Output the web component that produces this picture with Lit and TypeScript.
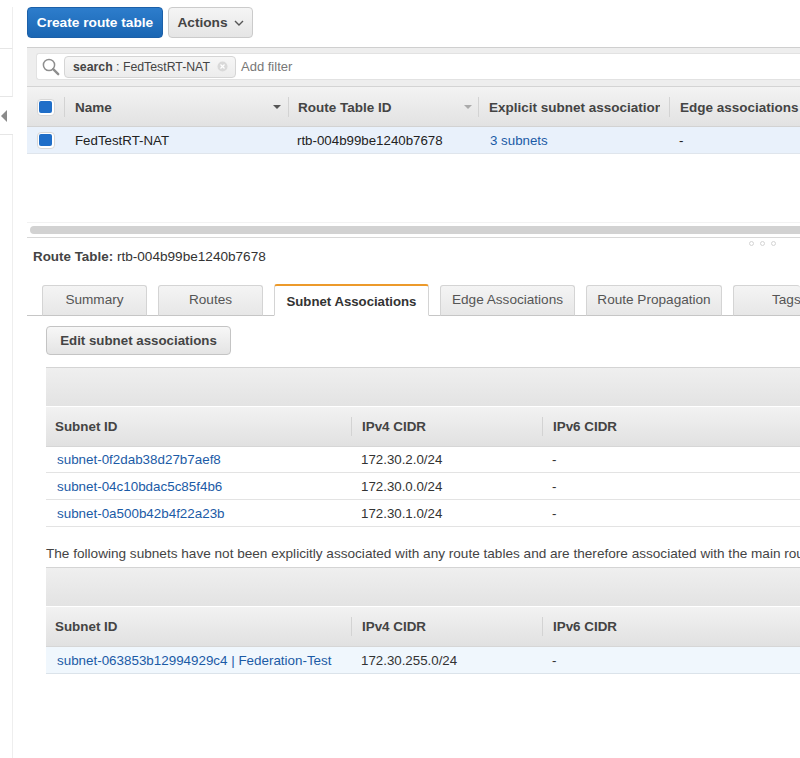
import { LitElement, html, css } from "lit";
import { customElement } from "lit/decorators.js";

const assoc = [
  ["subnet-0f2dab38d27b7aef8", "172.30.2.0/24"],
  ["subnet-04c10bdac5c85f4b6", "172.30.0.0/24"],
  ["subnet-0a500b42b4f22a23b", "172.30.1.0/24"],
];

@customElement("app-root")
export class AppRoot extends LitElement {
  static styles = css`
    :host {
      display: block;
      width: 800px;
      height: 758px;
      overflow: hidden;
      background: #fff;
      font-family: "Liberation Sans", Arial, sans-serif;
      font-size: 13.3px;
      color: #333;
    }
    * { box-sizing: border-box; }
    .page { display: flex; width: 800px; height: 758px; }
    .side {
      flex: 0 0 13px;
      height: 758px;
      padding-top: 7px;
      display: flex;
      flex-direction: column;
    }
    .side .s1 { height: 42px; border-bottom: 1px solid #e6e6e6; border-right: 1px solid #eeeeee; }
    .side .s2 { height: 48px; border-bottom: 1px solid #e6e6e6; border-right: 1px solid #eeeeee; }
    .side .handle { height: 38px; border-bottom: 1px solid #e6e6e6; display: flex; align-items: center; }
    .side .s3 { flex: 1; border-right: 1px solid #eeeeee; }
    .tri { width: 0; height: 0; border-top: 6px solid transparent; border-bottom: 6px solid transparent; border-right: 6px solid #8a8a8a; margin-left: 1px; }
    .main { flex: 0 0 787px; width: 787px; overflow: hidden; padding-left: 14px; }

    .actions { display: flex; gap: 5px; height: 47px; padding-top: 7px; }
    .btn {
      height: 31px; border-radius: 4px; font-weight: 700; font-size: 13.7px;
      display: flex; align-items: center; justify-content: center;
    }
    .primary {
      width: 136px; color: #fff; border: 1px solid #1c60a8;
      background: linear-gradient(#2d7dcc, #1a66b3);
    }
    .secondary {
      width: 85px; gap: 6px; color: #444; border: 1px solid #cbcbcb;
      background: linear-gradient(#f5f5f5, #e5e5e5);
    }
    .filter {
      width: 773px; height: 40px; background: #eeeeee;
      border-top: 1px solid #cfcfcf; border-bottom: 1px solid #d4d4d4;
      padding: 5px 0 6px 9px;
    }
    .search {
      height: 27px; background: #fff; border-radius: 3px 0 0 3px; border: 1px solid #e2e2e2; border-right: 0;
      display: flex; align-items: center; padding-left: 5px; gap: 3px;
    }
    .search svg.mag { flex: none; margin-right: 1px; }
    .chip {
      width: 172px; height: 22px; border: 1px solid #d5d5d5; border-radius: 4px;
      background: linear-gradient(#f6f6f6, #ececec); display: flex; align-items: center;
      padding-left: 8px; font-size: 12.3px; color: #444; gap: 7px; white-space: nowrap;
    }
    .chip b { font-weight: 700; }
    .add { color: #777; margin-left: 2px; font-size: 13px; }

    .thead {
      display: grid; height: 40px; width: 773px; align-items: center; padding-top: 1px;
      grid-template-columns: 37px 224px 190px 191px 131px;
      background: linear-gradient(#f3f3f3, #e2e2e2);
      border-bottom: 1px solid #d2d2d2;
      font-weight: 700; color: #444; font-size: 13.5px;
    }
    .th {
      height: 20px; display: flex; align-items: center; justify-content: space-between;
      border-left: 1px solid #d3d3d3; padding: 0 7px 0 10px; white-space: nowrap; overflow: hidden;
    }
    .th.id { padding: 0 6px 0 9px; }
    .th.first { border-left: 0; justify-content: center; padding: 0; }
    .clip { overflow: hidden; width: 171px; flex: none; }
    .caret { width: 0; height: 0; border-left: 4px solid transparent; border-right: 4px solid transparent; border-top: 4px solid #555; flex: none; }
    .caret.dim { border-top-color: #aaa; }
    .check {
      width: 18px; height: 17px; padding: 1.5px; border-radius: 4px; background: #fff; border: 1px solid #d7d7d7;
      display: block;
    }
    .check i { display: block; width: 100%; height: 100%; border-radius: 2px; background: #1f6ec8; }
    .trow {
      display: grid; height: 27px; width: 773px; align-items: center;
      grid-template-columns: 37px 224px 190px 191px 131px;
      background: #e9f1fb; border-bottom: 1px solid #dfe5ec; color: #222;
    }
    .trow .c { padding-left: 11px; white-space: nowrap; }
    .trow .c.id { padding-left: 9px; }
    .trow .c.link { padding-left: 12px; }
    .trow .c.dash { padding-left: 10px; }
    .trow .c.first { padding-left: 0; display: flex; justify-content: center; }
    a { color: #1b5ba6; text-decoration: none; }

    .scroll { width: 773px; height: 83px; padding-top: 68px; }
    .track { height: 12px; border-top: 1px solid #f2f2f2; padding-top: 3px; }
    .bar { margin-left: 3px; height: 8px; border-radius: 4px 0 0 4px; background: #d2d2d2; }
    .split { width: 773px; height: 10px; border-top: 1px solid #d8d8d8; display: flex; justify-content: flex-end; }
    .dots { display: flex; gap: 6px; padding: 3px 24px 0 0; }
    .dots i { width: 5px; height: 5px; border: 1px solid #d4d4d4; border-radius: 50%; }

    .title { padding-left: 6px; height: 20px; line-height: 20px; color: #333; font-size: 13.6px; }
    .title b { font-weight: 700; color: #444; font-size: 13.4px; }
    .tabs {
      width: 773px; height: 34px; margin-top: 15px; padding-left: 15px; display: flex; gap: 11px;
      align-items: flex-end; border-bottom: 1px solid #c6c6c6; color: #555; font-size: 13.6px;
    }
    .tab {
      height: 31px; margin-bottom: -1px; border: 1px solid #d4d4d4; border-bottom: 1px solid #c6c6c6;
      border-radius: 3px 3px 0 0; display: flex; align-items: center; justify-content: center;
      background: linear-gradient(#f4f4f4, #e7e7e7); padding-bottom: 3px; white-space: nowrap; flex: none;
    }
    .tab.on {
      height: 32px; background: #fff; border: 1px solid #d4d4d4; border-top: 2px solid #ec9a2b; border-bottom: 1px solid #fff;
      color: #333; font-weight: 700; font-size: 13.2px; padding-bottom: 0; padding-top: 1px;
    }
    .tab.tags { justify-content: flex-start; padding-left: 38px; border-right: 0; }
    .w105 { width: 105px; }
    .w155 { width: 155px; }
    .w135 { width: 135px; }
    .w136 { width: 136px; }
    .w67 { width: 67px; }

    .body { padding-left: 19px; }
    .edit {
      width: 185px; height: 29px; margin: 10px 0 12px; color: #444; font-size: 13.3px;
      border: 1px solid #c4c4c4; background: linear-gradient(#f7f7f7, #e4e4e4);
    }
    .band {
      width: 754px; height: 40px; background: linear-gradient(#efefef, #e3e3e3);
      border-top: 1px solid #d4d4d4; border-bottom: 1px solid #fff;
    }
    .shead {
      display: grid; width: 754px; height: 40px; align-items: center;
      grid-template-columns: 305px 191px 258px;
      background: linear-gradient(#f2f2f2, #e1e1e1); border-bottom: 1px solid #d6d6d6;
      font-weight: 700; font-size: 13.4px; color: #444;
    }
    .shead div { height: 19px; display: flex; align-items: center; padding-left: 9px; }
    .shead div + div { border-left: 1px solid #d3d3d3; padding-left: 10px; }
    .srow {
      display: grid; width: 754px; height: 27px; align-items: center;
      grid-template-columns: 305px 191px 258px; border-bottom: 1px solid #e3e3e3; color: #333;
    }
    .srow.short { height: 26px; }
    .srow div { padding-left: 10px; white-space: nowrap; }
    .srow div:first-child { padding-left: 11px; font-size: 13.4px; }
    .srow.sel { background: #f0f7fd; border-bottom: 1px solid #dbe3ea; }
    .note { height: 40px; padding-top: 19px; line-height: 15px; white-space: nowrap; color: #444; font-size: 13.6px; }
  `;

  private head() {
    return html`
      <div class="shead">
        <div>Subnet ID</div>
        <div>IPv4 CIDR</div>
        <div>IPv6 CIDR</div>
      </div>`;
  }

  render() {
    return html`
      <div class="page">
        <div class="side">
          <div class="s1"></div>
          <div class="s2"></div>
          <div class="handle"><span class="tri"></span></div>
          <div class="s3"></div>
        </div>
        <div class="main">
          <div class="actions">
            <div class="btn primary">Create route table</div>
            <div class="btn secondary">Actions
              <svg width="10" height="6" viewBox="0 0 10 6"><path d="M1 1l4 4 4-4" fill="none" stroke="#555" stroke-width="1.4"/></svg>
            </div>
          </div>
          <div class="filter">
            <div class="search">
              <svg class="mag" width="18" height="18" viewBox="0 0 18 18">
                <circle cx="7" cy="7" r="5.6" fill="none" stroke="#8e8e8e" stroke-width="1.5"/>
                <path d="M11.2 11.2l5 5" stroke="#8e8e8e" stroke-width="2.4" stroke-linecap="round"/>
              </svg>
              <div class="chip"><span><b>search</b> : FedTestRT-NAT</span>
                <svg width="11" height="11" viewBox="0 0 12 12">
                  <circle cx="6" cy="6" r="5.5" fill="#d9d9d9"/>
                  <path d="M3.8 3.8l4.4 4.4M8.2 3.8l-4.4 4.4" stroke="#fff" stroke-width="1.3"/>
                </svg>
              </div>
              <span class="add">Add filter</span>
            </div>
          </div>
          <div class="thead">
            <div class="th first"><span class="check"><i></i></span></div>
            <div class="th">Name<span class="caret"></span></div>
            <div class="th id">Route Table ID<span class="caret dim"></span></div>
            <div class="th"><span class="clip">Explicit subnet associations</span></div>
            <div class="th">Edge associations</div>
          </div>
          <div class="trow">
            <div class="c first"><span class="check"><i></i></span></div>
            <div class="c">FedTestRT-NAT</div>
            <div class="c id">rtb-004b99be1240b7678</div>
            <div class="c link"><a>3 subnets</a></div>
            <div class="c dash">-</div>
          </div>
          <div class="scroll"><div class="track"><div class="bar"></div></div></div>
          <div class="split"><div class="dots"><i></i><i></i><i></i></div></div>
          <div class="title"><b>Route Table:</b> rtb-004b99be1240b7678</div>
          <div class="tabs">
            <div class="tab w105">Summary</div>
            <div class="tab w105">Routes</div>
            <div class="tab on w155">Subnet Associations</div>
            <div class="tab w135">Edge Associations</div>
            <div class="tab w136">Route Propagation</div>
            <div class="tab tags w67">Tags</div>
          </div>
          <div class="body">
            <div class="btn edit">Edit subnet associations</div>
            <div class="band"></div>
            ${this.head()}
            ${assoc.map(
              ([id, cidr], i) =>
                html`<div class="srow ${i === 0 ? "short" : ""}"><div><a>${id}</a></div><div>${cidr}</div><div>-</div></div>`
            )}
            <div class="note">The following subnets have not been explicitly associated with any route tables and are therefore associated with the main route table.</div>
            <div class="band"></div>
            ${this.head()}
            <div class="srow sel"><div><a>subnet-063853b12994929c4 | Federation-Test</a></div><div>172.30.255.0/24</div><div>-</div></div>
          </div>
        </div>
      </div>
    `;
  }
}
